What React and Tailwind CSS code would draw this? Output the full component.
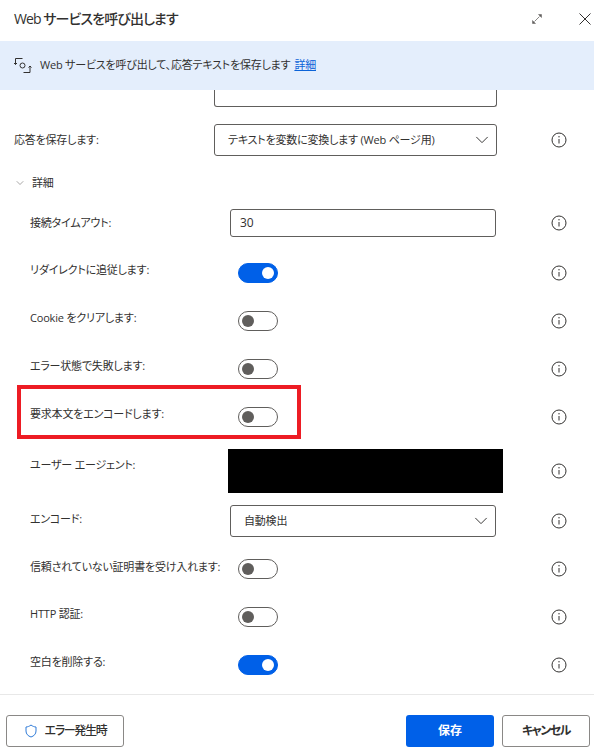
const FONT = "font-['Open_Sans','Noto_Sans_CJK_JP',sans-serif] [font-feature-settings:'palt']";
const TEXT = 'text-[11px] tracking-[-0.2px] text-[#323130]';

const InfoIcon = () => (
  <svg width="18" height="18" viewBox="0 0 18 18" fill="none" className="shrink-0">
    <circle cx="9" cy="9" r="7" stroke="#323130" strokeWidth="1" />
    <path d="M9 8v4.500" stroke="#323130" strokeWidth="1" />
    <circle cx="9" cy="5.800" r="0.7" fill="#323130" />
  </svg>
);

const Chevron = ({ size = 14, color = '#323130' }) => (
  <svg width={size} height={size} viewBox="0 0 16 16" fill="none">
    <path d="M1.500 4.500 8 11l6.500-6.500" stroke={color} strokeWidth="1.100" />
  </svg>
);

const Toggle = ({ on }) => (
  <div
    className={`w-10 h-5 rounded-full flex items-center px-[3px] border ${
      on ? 'bg-[#0060e8] border-[#0060e8] justify-end' : 'bg-white border-[#605e5c] justify-start'
    }`}
  >
    <div className={`w-3 h-3 rounded-full ${on ? 'bg-white' : 'bg-[#605e5c]'}`} />
  </div>
);

const Row = ({ label, labelClass = 'pb-1.5', rowClass = 'h-12', children }) => (
  <div className={`${rowClass} flex items-center pl-[30px] pr-[26px]`}>
    <div className={`w-[200px] shrink-0 whitespace-nowrap ${TEXT} ${labelClass}`}>{label}</div>
    <div className="flex-1 flex items-center">{children}</div>
    <InfoIcon />
  </div>
);

const TextBox = ({ children }) => (
  <div className="w-[266px] h-7 border border-[#605e5c] rounded-[3px] flex items-center px-[9px] text-xs text-[#323130]">
    {children}
  </div>
);

const Select = ({ width, children }) => (
  <div className={`${width} h-8 border border-[#605e5c] rounded-[3px] flex items-center justify-between pl-[13px] pr-[7px] ${TEXT}`}>
    <span>{children}</span>
    <Chevron />
  </div>
);

const App = () => {
  return (
    <div className={`w-[594px] h-[752px] bg-white flex flex-col overflow-hidden ${FONT}`}>
      <div className="h-[41px] shrink-0 flex items-center justify-between pl-[14px] pr-[2px] pb-1">
        <h1 className="text-sm font-medium tracking-[-0.9px] text-[#323130]">Web サービスを呼び出します</h1>
        <div className="flex items-center gap-[35px]">
          <svg width="12" height="12" viewBox="0 0 12 12" fill="none">
            <path d="M3.500 8.500 8.500 3.500" stroke="#8a8886" strokeWidth="1" />
            <path d="M7.500 1.500h3v3zM1.500 7.500v3h3z" fill="#605e5c" stroke="#605e5c" strokeWidth="0.5" />
          </svg>
          <svg width="14" height="14" viewBox="0 0 14 14" fill="none">
            <path d="M1.500 1.500l11 11M12.500 1.500l-11 11" stroke="#323130" strokeWidth="1" />
          </svg>
        </div>
      </div>

      <div className={`h-[49px] shrink-0 bg-[#e4eefc] flex items-center pl-[14px] ${TEXT}`}>
        <svg width="18" height="18" viewBox="0 0 18 18" fill="none" className="mr-2 shrink-0">
          <path d="M8.500 1.500H1.500V7.500M0 6l1.500 1.500L3 6" stroke="#323130" strokeWidth="1" />
          <circle cx="8.500" cy="8.500" r="2.500" stroke="#323130" strokeWidth="1" />
          <path d="M9.500 15.500h6.500V9M14.500 10.500 16 9l1.500 1.500" stroke="#323130" strokeWidth="1" />
        </svg>
        <span>Web サービスを呼び出して、応答テキストを保存します</span>
        <a href="#" className="ml-1 text-[#0b63d8] underline">詳細</a>
      </div>

      <div className="flex-1 min-h-0">
        <div className="pl-[214px]">
          <div className="w-[283px] h-[17px] border-x border-b border-[#605e5c] rounded-b-[3px]" />
        </div>

        <div className="mt-[17px] flex items-center pl-[14px] pr-[26px]">
          <div className={`w-[200px] shrink-0 ${TEXT}`}>応答を保存します:</div>
          <div className="flex-1"><Select width="w-[283px]">テキストを変数に変換します (Web ページ用)</Select></div>
          <InfoIcon />
        </div>

        <div className={`mt-[17px] h-5 flex items-center gap-2 pl-4 ${TEXT}`}>
          <Chevron size={8} color="#605e5c" />
          <span>詳細</span>
        </div>

        <div className="mt-[6px]">
          <Row label="接続タイムアウト:" labelClass="" rowClass="h-12 mb-[2px]">
            <TextBox>30</TextBox>
          </Row>
          <Row label="リダイレクトに追従します:"><div className="pl-2"><Toggle on /></div></Row>
          <Row label="Cookie をクリアします:"><div className="pl-2"><Toggle /></div></Row>
          <Row label="エラー状態で失敗します:"><div className="pl-2"><Toggle /></div></Row>
          <div className="relative">
            <Row label="要求本文をエンコードします:"><div className="pl-2"><Toggle /></div></Row>
            <div className="absolute left-[17px] top-[-8px] w-[284px] h-[54px] border-4 border-[#ed1c24]" />
          </div>
          <Row label="ユーザー エージェント:" labelClass="pb-3" rowClass="h-[60px]">
            <div className="w-[275px] h-11 ml-[-2px] bg-black" />
          </Row>
          <Row label="エンコード:" labelClass="pb-1" rowClass="h-10 mb-1">
            <Select width="w-[266px]">自動検出</Select>
          </Row>
          <Row label="信頼されていない証明書を受け入れます:" labelClass="pb-1"><div className="pl-2"><Toggle /></div></Row>
          <Row label="HTTP 認証:"><div className="pl-2"><Toggle /></div></Row>
          <Row label="空白を削除する:"><div className="pl-2"><Toggle on /></div></Row>
        </div>
      </div>

      <div className="h-[58px] shrink-0 border-t border-[#e8e8e8] flex items-start justify-between pt-5 pl-[6px] pr-1">
        <button className="w-[118px] h-8 border border-[#8a8886] rounded-[3px] flex items-center justify-center gap-[7px] text-xs font-medium tracking-[-1.300px] text-[#323130]">
          <svg width="14" height="14" viewBox="0 0 14 14" fill="none">
            <path d="M7 1c1.600 1.300 3.300 1.900 5 2v4c0 3-2 5-5 6-3-1-5-3-5-6V3c1.700-.1 3.400-.7 5-2z" stroke="#2f7bd8" strokeWidth="1" />
          </svg>
          エラー発生時
        </button>
        <div className="flex gap-2">
          <button className="w-[88px] h-8 rounded-[3px] bg-[#0060e8] text-xs font-semibold text-white">保存</button>
          <button className="w-[88px] h-8 border border-[#8a8886] rounded-[3px] text-xs font-semibold tracking-[-1.500px] text-[#323130]">キャンセル</button>
        </div>
      </div>
    </div>
  );
};

export default App;
